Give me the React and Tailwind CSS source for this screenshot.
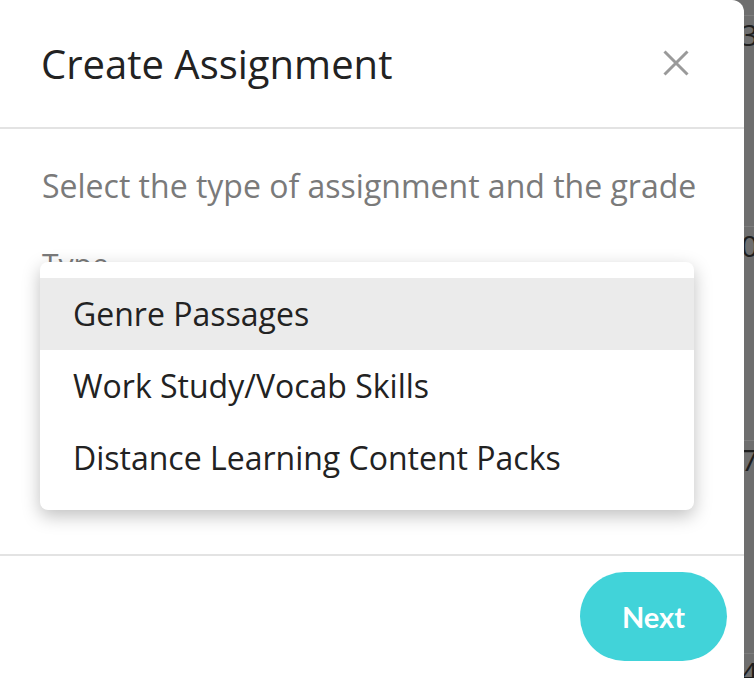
import React from "react";

const OPTIONS = [
  "Genre Passages",
  "Work Study/Vocab Skills",
  "Distance Learning Content Packs",
];

function BackgroundStrip() {
  const rows = [
    { digit: "3", line: 15 },
    { digit: "0", line: 226 },
    { digit: "7", line: 440 },
    { digit: "4", line: 653 },
  ];
  return (
    <div className="flex-1 h-[678px] bg-[#6e6e6e] overflow-hidden relative">
      {rows.map((r) => (
        <div
          key={r.digit}
          className="absolute left-0 w-full border-t border-[#7d7d7d]"
          style={{ top: r.line }}
        >
          <div className="-ml-[3px] mt-[1px] text-[30px] leading-[36px] text-[#1e1e1e]">
            {r.digit}
          </div>
        </div>
      ))}
    </div>
  );
}

export default function App() {
  return (
    <div
      className="w-[754px] h-[678px] flex bg-[#6e6e6e] overflow-hidden"
      style={{ fontFamily: "'Open Sans', 'Liberation Sans', sans-serif" }}
    >
      <div className="w-[744px] h-[678px] bg-white rounded-tr-[12px] flex flex-col relative z-10">
        {/* Header */}
        <div className="h-[129px] flex items-center justify-between pl-[41px] pr-[55px] border-b-2 border-[#e3e3e3] shrink-0">
          <h1 className="text-[40px] text-[#222] leading-none">
            Create Assignment
          </h1>
          <svg width="26" height="26" viewBox="0 0 26 26" className="text-[#9a9a9a] -mt-[2px]">
            <path d="M1.5 1.5 L24.5 24.5 M24.5 1.5 L1.5 24.5" stroke="currentColor" strokeWidth="3" />
          </svg>
        </div>

        {/* Body */}
        <div className="flex-1 px-[42px] pt-[37px] relative">
          <p className="text-[32px] text-[#7a7a7a] leading-[40px]">
            Select the type of assignment and the grade
          </p>
          <div className="mt-[40px] text-[30px] text-[#7a7a7a] leading-[36px]">Type</div>
          <div className="mt-[61px] mr-[8px] h-[2px] bg-[#41d3d9]" />
          <div className="mt-[91px] text-[30px] text-[#7a7a7a] leading-[36px]">Grade</div>
          <div className="mt-[8px] mr-[8px] h-[1px] bg-[#777]" />

          {/* Open dropdown */}
          <div className="absolute left-[40px] top-[133px] w-[654px] h-[248px] bg-white rounded-[8px] shadow-[0_6px_18px_rgba(0,0,0,0.25)] pt-[16px]">
            {OPTIONS.map((opt, i) => (
              <div
                key={opt}
                className={`h-[72px] flex items-center pl-[33px] text-[32px] text-[#222] ${
                  i === 0 ? "bg-[#ebebeb]" : ""
                }`}
              >
                {opt}
              </div>
            ))}
          </div>
        </div>

        {/* Footer */}
        <div className="h-[124px] border-t-2 border-[#e3e3e3] flex justify-end items-start pt-[16px] pr-[17px] shrink-0">
          <button
            className="w-[147px] h-[89px] rounded-full bg-[#41d3d9] text-white text-[29px] font-bold"
            style={{ fontFamily: "Lato, 'Open Sans', sans-serif" }}
          >
            Next
          </button>
        </div>
      </div>
      <BackgroundStrip />
    </div>
  );
}
